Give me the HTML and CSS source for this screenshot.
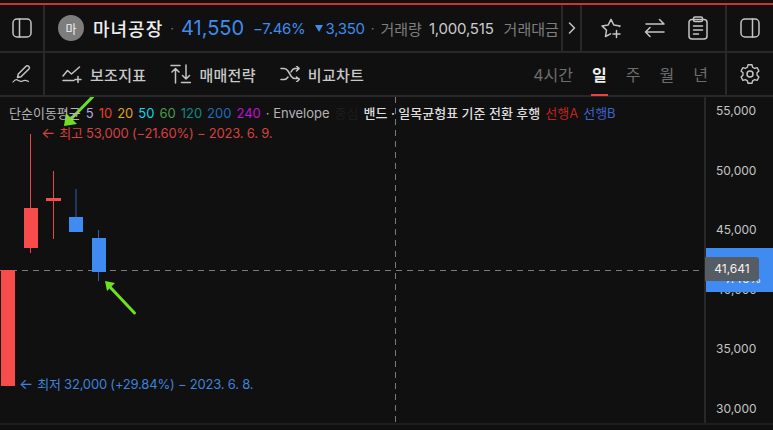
FILE: index.html
```html
<!DOCTYPE html>
<html lang="ko">
<head>
<meta charset="utf-8">
<title>마녀공장</title>
<link rel="stylesheet" href="styles.css">
</head>
<body>
<div class="app">
  <header class="info-row">
    <div class="cell side">
      <svg class="ico" width="20" height="20" viewBox="0 0 20 20"><rect x="1" y="1" width="18" height="18" rx="4"/><path d="M7.5 1v18"/></svg>
    </div>
    <div class="ticker">
      <span class="avatar">마</span>
      <span class="name">마녀공장</span>
      <span class="dot first">·</span>
      <span class="price">41,550</span>
      <span class="pct">−7.46%</span>
      <span class="delta"><i class="tri"></i>3,350</span>
      <span class="dot">·</span>
      <span class="lbl">거래량</span>
      <span class="val">1,000,515</span>
      <span class="lbl amt">거래대금 43,1</span>
    </div>
    <div class="cell more">
      <svg class="ico" width="8" height="12" viewBox="0 0 8 12"><path d="M1.5 1l5 5-5 5"/></svg>
    </div>
    <div class="actions">
      <svg class="ico" width="22" height="22" viewBox="0 0 22 22"><path d="M19.5 9.5l.5-.6-6.2-.9L11 2.300 8.200 8l-6.200.9 4.500 4.400-1 6.200 5-2.600"/><path d="M16.500 13.500v7M13 17h7"/></svg>
      <svg class="ico" width="22" height="20" viewBox="0 0 22 20"><path d="M2 6h18M15.500 1.500L20 6M1.500 14H20M6 9.500L1.500 14 6 18.500"/></svg>
      <svg class="ico" width="20" height="24" viewBox="0 0 20 24"><rect x="1" y="3.500" width="18" height="19.500" rx="3"/><rect x="5.500" y="1" width="9" height="4.500" rx="1.500"/><path d="M5.500 10h9M5.500 14h9M5.500 18h5"/></svg>
    </div>
    <div class="cell side-r">
      <svg class="ico" width="20" height="20" viewBox="0 0 20 20"><rect x="1" y="1" width="18" height="18" rx="4"/><path d="M12.500 1v18"/></svg>
    </div>
  </header>

  <nav class="tool-row">
    <div class="cell side">
      <svg class="ico" width="20" height="20" viewBox="0 0 20 20"><path d="M5.500 13.500l.8-3.500L14 2.200a1.800 1.800 0 0 1 2.600 0l.3.300a1.800 1.800 0 0 1 0 2.500L9 12.800z"/><path d="M1 18c1.500-2 3.500-2.800 5-1.800s2.500 2 4.500.8 3.500-1 6 .5" class="thin"/></svg>
    </div>
    <div class="tools">
      <span class="tool">
        <svg class="ico" width="20" height="18" viewBox="0 0 20 18"><path d="M1 11l4.500-5.500 4 3.500L17.500 2"/><path d="M1 15.500h11M16 11.500v6M13 14.500h6"/></svg>보조지표</span>
      <span class="tool">
        <svg class="ico" width="21" height="20" viewBox="0 0 21 20"><path d="M1 1.500h9M5.500 19V5M2 8l3.500-3.500L9 8M11.500 18.500h9M16 1v14M12.500 11.500L16 15l3.500-3.500"/></svg>매매전략</span>
      <span class="tool">
        <svg class="ico" width="20" height="16" viewBox="0 0 20 16"><path d="M1 2.500h3c2 0 3 1 4 2.500l3 5c1 1.500 2 2.500 4 2.500h4M1 13.500h3c2 0 3-1 4-2.500M11 6c1-2 2-3.500 4-3.500h4M16.500 0l2.700 2.500-2.700 2.500M16.500 11l2.700 2.500-2.700 2.500"/></svg>비교차트</span>
    </div>
    <div class="periods">
      <span>4시간</span>
      <span class="on">일</span>
      <span>주</span>
      <span>월</span>
      <span>년</span>
    </div>
    <div class="cell side-r">
      <svg class="ico" width="20" height="22" viewBox="0 0 20 22"><path d="M7.800 1.500h4.400l.7 2.800 2.200 1.200 2.800-.8 2 3.800-2.100 2 0 2.600 2.100 2-2 3.800-2.800-.8-2.200 1.300-.7 2.600H7.800l-.7-2.600-2.200-1.300-2.800.8-2-3.800 2.100-2 0-2.600-2.100-2 2-3.800 2.800.8 2.200-1.200z" transform="translate(1 .4) scale(.9)"/><circle cx="10" cy="11" r="3"/></svg>
    </div>
  </nav>

  <main class="chart">
    <section class="plot">
      <svg class="canvas" width="704" height="326" viewBox="0 97 704 326">
        <path class="cross" d="M395.500 97V423M0 270.500H704"/>
        <path class="wick up" d="M30.500 134V253M53.500 171V239"/>
        <path class="wick down" d="M76 189V218M98.500 230V281"/>
        <rect class="body up" x="1" y="270" width="14" height="116"/>
        <rect class="body up" x="24" y="208" width="14" height="40"/>
        <rect class="body up" x="46" y="198" width="15" height="3"/>
        <rect class="body down" x="69" y="217" width="14" height="15"/>
        <rect class="body down" x="92" y="238" width="14" height="34"/>
        <path class="arrow" d="M92.500 97L71 119"/>
        <path class="arrow-head" d="M64 126l2-13 11 11z"/>
        <path class="arrow" d="M134.500 313L110 287"/>
        <path class="arrow-head" d="M105 281l2 10 8-8z"/>
      </svg>
      <div class="legend">
        <span class="g">단순이동평균</span>
        <span class="c5">5</span><span class="c10">10</span><span class="c20">20</span><span class="c50">50</span><span class="c60">60</span><span class="c120">120</span><span class="c200">200</span><span class="c240">240</span>
        <span class="g">· Envelope</span>
        <span class="mid">중심</span>
        <span class="w">밴드 · 일목균형표 기준 전환 후행</span>
        <span class="ra">선행A</span>
        <span class="rb">선행B</span>
      </div>
      <div class="note high"><i class="larr">←</i>최고 53,000 (−21.60%) − 2023. 6. 9.</div>
      <div class="note low"><i class="larr">←</i>최저 32,000 (+29.84%) − 2023. 6. 8.</div>
    </section>
    <aside class="axis">
      <span>55,000</span>
      <span>50,000</span>
      <span>45,000</span>
      <span>40,000</span>
      <span>35,000</span>
      <span class="last">30,000</span>
      <div class="cur"><b>41,550</b><b>−7.46%</b></div>
      <div class="hover">41,641</div>
    </aside>
  </main>
</div>
</body>
</html>
```

FILE: styles.css
```css
* { box-sizing: border-box; }
html, body { margin: 0; padding: 0; background: #101010; }
body {
  width: 773px;
  height: 430px;
  overflow: hidden;
  font-family: Inter, "Noto Sans CJK KR", sans-serif;
  color: #ddd;
}
.app {
  display: flex;
  flex-direction: column;
  height: 430px;
  padding-top: 3px;
  background: #101010;
}
.ico { fill: none; stroke: #c4c4c4; stroke-width: 1.5; stroke-linecap: round; stroke-linejoin: round; flex: none; }
.ico .thin { stroke-width: 1.2; }

.info-row {
  display: flex;
  flex: none;
  height: 50px;
  border-top: 2px solid #d4312f;
  border-bottom: 2px solid #282828;
}
.tool-row {
  display: flex;
  flex: none;
  height: 44px;
  border-bottom: 2px solid #282828;
}
.cell { display: flex; align-items: center; justify-content: center; flex: none; }
.side { width: 45px; border-right: 2px solid #282828; }
.side-r { width: 48px; border-left: 2px solid #282828; }
.more { width: 21px; border-left: 2px solid #282828; border-right: 2px solid #282828; }

.ticker {
  width: 516px;
  display: flex;
  align-items: center;
  overflow: hidden;
  white-space: nowrap;
  padding-left: 13px;
  font-size: 14px;
}
.avatar {
  width: 26px;
  height: 26px;
  border-radius: 50%;
  background: #7d7d7d;
  color: #f0f0f0;
  font-size: 12px;
  display: flex;
  align-items: center;
  justify-content: center;
  flex: none;
}
.name { margin-left: 9px; font-size: 18px; font-weight: 500; color: #eee; letter-spacing: 1px; }
.dot { color: #777; margin: 0 6px; font-size: 13px; }
.dot.first { margin: 0 7px 0 7px; }
.price { font-size: 20px; color: #3f8bee; }
.pct { margin-left: 9px; font-size: 15px; color: #3f8bee; letter-spacing: -.3px; }
.delta { margin-left: 9px; font-size: 15px; color: #3f8bee; display: flex; align-items: center; letter-spacing: -.3px; }
.tri { width: 0; height: 0; border-left: 4.500px solid transparent; border-right: 4.500px solid transparent; border-top: 7px solid #3f8bee; margin-right: 3px; }
.lbl { color: #7e7e7e; font-size: 15px; }
.val { color: #ccc; margin-left: 7px; font-size: 15px; letter-spacing: -.2px; }
.amt { margin-left: 10px; }

.actions {
  width: 143px;
  display: flex;
  align-items: center;
  justify-content: center;
  gap: 22px;
  flex: none;
}

.tools {
  display: flex;
  align-items: center;
  gap: 24px;
  padding-left: 17px;
  flex: 1;
}
.tool {
  display: flex;
  align-items: center;
  gap: 8px;
  font-size: 15px;
  font-weight: 500;
  color: #c8c8c8;
  letter-spacing: .3px;
}
.periods {
  display: flex;
  align-items: center;
  gap: 19px;
  padding-right: 17px;
  font-size: 16px;
  color: #6d6d6d;
  height: 100%;
}
.periods span { position: relative; height: 100%; display: flex; align-items: center; }
.periods .on { color: #eee; font-weight: 700; }
.periods .on::after {
  content: "";
  position: absolute;
  left: -1px;
  right: -1px;
  bottom: -1px;
  height: 2px;
  background: #e8413e;
}

.chart {
  flex: none;
  height: 328px;
  display: flex;
  position: relative;
  overflow: hidden;
  border-bottom: 2px solid #1e1e1e;
}
.plot { width: 704px; position: relative; flex: none; }
.canvas { position: absolute; left: 0; top: 0; display: block; }
.cross { fill: none; stroke: #7b7b7b; stroke-width: 1; stroke-dasharray: 6 5; }
.wick { fill: none; stroke-width: 1; }
.wick.up { stroke: #e5484a; }
.wick.down { stroke: #2c62ad; }
.body.up { fill: #f84c4c; }
.body.down { fill: #3f8bf2; }
.arrow { stroke: #6fe01f; stroke-width: 3; stroke-linecap: round; fill: none; }
.arrow-head { fill: #6fe01f; }

.legend {
  position: absolute;
  left: 9px;
  top: 8px;
  display: flex;
  gap: 5px;
  font-size: 13px;
  line-height: 16px;
  white-space: nowrap;
}
.g { color: #b4b4b4; }
.c5 { color: #b9a5e0; }
.c10 { color: #e8421c; }
.c20 { color: #e0a11d; }
.c50 { color: #14d6e8; }
.c60 { color: #4c9a4c; }
.c120 { color: #0f8a8a; }
.c200 { color: #1f6cb8; }
.c240 { color: #c010d8; }
.mid { color: #1c1c1c; }
.w { color: #dedede; font-weight: 500; }
.ra { color: #c02222; }
.rb { color: #3d63c8; }

.note { position: absolute; font-size: 13px; line-height: 16px; white-space: nowrap; letter-spacing: -.2px; }
.larr { font-style: normal; font-size: 15px; margin-right: 4px; }
.high { left: 41px; top: 28px; color: #d8403f; }
.low { left: 19px; top: 279px; color: #3f82dc; }

.axis {
  flex: 1;
  position: relative;
  display: flex;
  flex-direction: column;
  border-left: 2px solid #282828;
  padding-top: 4px;
}
.axis > span {
  height: 59.600px;
  line-height: 20px;
  padding-left: 10px;
  font-size: 12px;
  color: #c4c4c4;
  flex: none;
}
.axis > .last { height: 20px; }
.cur {
  position: absolute;
  left: 0;
  right: 0;
  top: 151px;
  height: 44px;
  background: #3f8bf2;
  display: flex;
  flex-direction: column;
  align-items: center;
  justify-content: center;
  font-size: 12px;
  line-height: 17px;
  color: #f2f2f2;
}
.cur b { font-weight: 400; }
.hover {
  position: absolute;
  left: -1px;
  top: 160px;
  width: 54px;
  height: 24px;
  border-radius: 0 3px 3px 0;
  background: #565c64;
  color: #f2f2f2;
  font-size: 12px;
  line-height: 24px;
  text-align: center;
}
```
